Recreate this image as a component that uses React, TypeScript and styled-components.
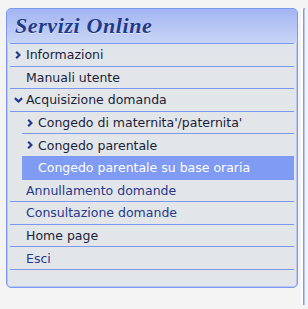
import React from "react";
import styled, { createGlobalStyle } from "styled-components";

const GlobalStyle = createGlobalStyle`
  html, body {
    margin: 0;
    padding: 0;
    background: #f4f4f4;
  }
`;

const Page = styled.div`
  display: flex;
  gap: 5px;
  width: 308px;
  height: 309px;
  box-sizing: border-box;
  padding: 8px 0 0 6px;
  overflow: hidden;
  border-top: 4px solid #fbfbfb;
  border-left: 3px solid #fbfbfb;
  margin-top: -4px;
  margin-left: -3px;
`;

const Panel = styled.div`
  flex: 0 0 auto;
  width: 292px;
  height: 280px;
  box-sizing: border-box;
  border: 1px solid #7d98ef;
  border-radius: 5px;
  box-shadow: inset 0 0 0 1px #b9c7f4;
  background: linear-gradient(#dde3ef, #e2e6e9 60px);
  overflow: hidden;
  font-family: "DejaVu Sans", Verdana, sans-serif;
`;

const SidePanel = styled.div`
  flex: 1 0 auto;
  height: 300px;
  border: 1px solid #7d98ef;
  border-right: none;
  border-radius: 5px 0 0 5px;
  background: #eceff5;
  box-shadow: inset 1px 0 0 #b9c7f4, -2px 0 0 #fdfdfd;
`;

const Header = styled.div`
  height: 34px;
  display: flex;
  align-items: center;
  padding-left: 8px;
  background: linear-gradient(#a2b5f2, #c9d5f6);
`;

const Title = styled.h2`
  margin: 0;
  font-family: "Liberation Serif", "Times New Roman", serif;
  font-style: italic;
  font-weight: bold;
  font-size: 22px;
  letter-spacing: 0.6px;
  color: #1f3a8a;
  text-shadow: 0 1px 0 rgba(255, 255, 255, 0.5);
`;

const List = styled.ul`
  list-style: none;
  margin: 0 3px 0 3px;
  padding: 0;
  border-top: 1px solid #7d98ef;
`;

const Row = styled.li<{ $level?: number; $active?: boolean; $blue?: boolean }>`
  display: flex;
  align-items: center;
  height: 21.6px;
  margin-left: ${(p) => (p.$level ? 12 : 0)}px;
  padding-left: 3px;
  border-bottom: 1px solid #7d98ef;
  font-size: 12.5px;
  white-space: nowrap;
  color: ${(p) => (p.$active ? "#ffffff" : p.$blue ? "#26398c" : "#1b1d3a")};
  background: ${(p) => (p.$active ? "#7f9bf3" : "transparent")};
`;

const Icon = styled.span`
  display: inline-flex;
  justify-content: center;
  width: 10px;
  margin-right: 3px;
`;

const Spacer = styled.span`
  display: inline-block;
  width: 13px;
`;

const ChevronRight = () => (
  <svg width="6" height="8" viewBox="0 0 6 8">
    <polyline points="1.2,0.8 4.4,4 1.2,7.2" fill="none" stroke="#23398a" strokeWidth="2.2" />
  </svg>
);

const ChevronDown = () => (
  <svg width="9" height="6" viewBox="0 0 9 6">
    <polyline points="0.9,1.1 4.5,4.5 8.1,1.1" fill="none" stroke="#23398a" strokeWidth="2.2" />
  </svg>
);

type Item = {
  label: string;
  level?: number;
  icon?: "right" | "down";
  active?: boolean;
  blue?: boolean;
};

const items: Item[] = [
  { label: "Informazioni", icon: "right" },
  { label: "Manuali utente" },
  { label: "Acquisizione domanda", icon: "down" },
  { label: "Congedo di maternita'/paternita'", level: 1, icon: "right" },
  { label: "Congedo parentale", level: 1, icon: "right" },
  { label: "Congedo parentale su base oraria", level: 1, active: true },
  { label: "Annullamento domande", blue: true },
  { label: "Consultazione domande", blue: true },
  { label: "Home page" },
  { label: "Esci", blue: true },
];

const App = () => {
  return (
    <>
      <GlobalStyle />
      <Page>
        <Panel>
          <Header>
            <Title>Servizi Online</Title>
          </Header>
          <List>
            {items.map((item) => (
              <Row key={item.label} $level={item.level} $active={item.active} $blue={item.blue}>
                {item.icon ? (
                  <Icon>{item.icon === "down" ? <ChevronDown /> : <ChevronRight />}</Icon>
                ) : (
                  <Spacer />
                )}
                {item.label}
              </Row>
            ))}
          </List>
        </Panel>
        <SidePanel />
      </Page>
    </>
  );
};

export default App;
